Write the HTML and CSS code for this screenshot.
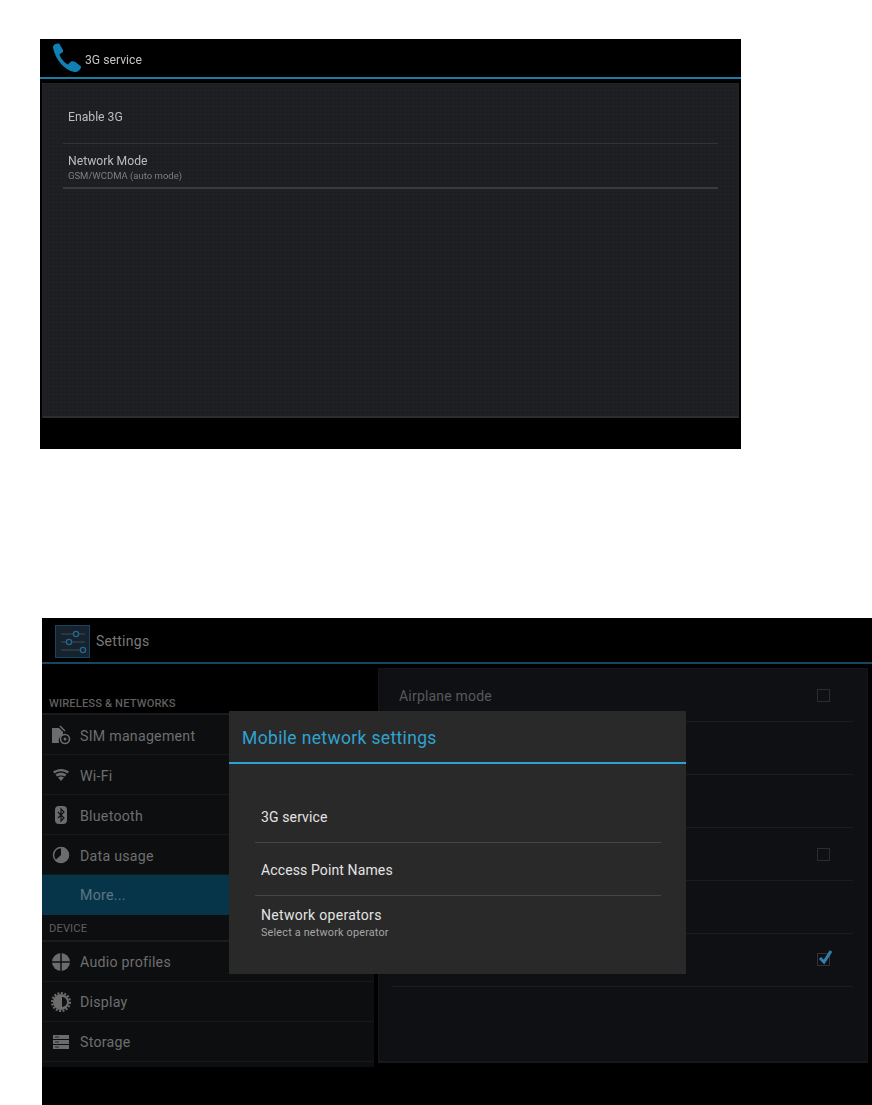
FILE: index.html
```html
<!DOCTYPE html>
<html lang="en">
<head>
<meta charset="utf-8">
<title>Android settings</title>
<link rel="stylesheet" href="styles.css">
</head>
<body>
<main class="page">
  <section class="shot shot-service">
    <header class="bar bar-service">
      <svg class="phone" viewBox="0 0 32 32" width="30" height="30"><path d="M1 4C2 1 6 0 8 1L12 8C12 10 10 11 8 12C9 16 13 21 17 23L20 20C22 19 24 20 26 21L31 25C31 28 28 31 24 31C13 29 3 17 1 4Z" fill="#0f7fb4"/></svg>
      <span class="bar-title">3G service</span>
    </header>
    <div class="service-panel">
      <div class="service-row service-row-one"><span class="service-name">Enable 3G</span></div>
      <div class="service-row service-row-two">
        <span class="service-name">Network Mode</span>
        <span class="service-sub">GSM/WCDMA (auto mode)</span>
      </div>
    </div>
    <div class="service-foot"></div>
  </section>

  <section class="shot shot-settings">
    <header class="bar bar-settings">
      <svg class="settings-icon" viewBox="0 0 35 33" width="35" height="33">
        <rect x="0.5" y="0.5" width="34" height="32" fill="#16232e" stroke="#1a4460"/>
        <path d="M6 9H30M6 17H30M6 25H30" stroke="#3f4a52" stroke-width="1"/>
        <circle cx="21" cy="9" r="2.6" fill="#16232e" stroke="#25688f" stroke-width="1.3"/>
        <circle cx="14" cy="17" r="2.6" fill="#16232e" stroke="#25688f" stroke-width="1.3"/>
        <circle cx="28" cy="25" r="2.6" fill="#16232e" stroke="#25688f" stroke-width="1.3"/>
      </svg>
      <span class="settings-title">Settings</span>
    </header>
    <div class="settings-body">
      <nav class="side">
        <div class="side-head side-head-first">WIRELESS &amp; NETWORKS</div>
        <div class="side-row">
          <svg class="side-icon" viewBox="0 0 20 20" width="20" height="20"><path d="M1 3H8L12 7V10A6 6 0 0 0 8 18H1Z" fill="#6c6c6c"/><path d="M9 1L14 6" stroke="#6c6c6c" stroke-width="1.5"/><circle cx="14" cy="14" r="4.5" fill="none" stroke="#6c6c6c" stroke-width="1.6"/><circle cx="14" cy="14" r="1.5" fill="#6c6c6c"/></svg>
          <span>SIM management</span>
        </div>
        <div class="side-row">
          <svg class="side-icon" viewBox="0 0 20 20" width="20" height="20"><path d="M2 6.500C7 3 13 3 18 6.500L16.500 8.500C12 5.500 8 5.500 3.500 8.500Z" fill="#6c6c6c"/><path d="M4.500 9.500C8 7.300 12 7.300 15.500 9.500L14 11.500C11.500 10 8.500 10 6 11.500Z" fill="#6c6c6c"/><path d="M7 12.500C9 11.300 11 11.300 13 12.500L10 16Z" fill="#6c6c6c"/></svg>
          <span>Wi-Fi</span>
        </div>
        <div class="side-row">
          <svg class="side-icon" viewBox="0 0 20 20" width="20" height="20"><rect x="4" y="1" width="12" height="18" rx="4" fill="#6c6c6c"/><path d="M7 7L13 13L10 16V4L13 7L7 13" fill="none" stroke="#111" stroke-width="1.200"/></svg>
          <span>Bluetooth</span>
        </div>
        <div class="side-row">
          <svg class="side-icon" viewBox="0 0 20 20" width="20" height="20"><circle cx="10" cy="10" r="7.500" fill="none" stroke="#6c6c6c" stroke-width="1.500"/><path d="M10 2A8 8 0 1 1 4 15.500L10 10Z" fill="#6c6c6c"/></svg>
          <span>Data usage</span>
        </div>
        <div class="side-row side-row-active"><span>More...</span></div>
        <div class="side-head side-head-device">DEVICE</div>
        <div class="side-row side-row-device">
          <svg class="side-icon" viewBox="0 0 20 20" width="20" height="20"><circle cx="10" cy="10" r="9" fill="#6c6c6c"/><path d="M10 0V20M0 10H20" stroke="#111" stroke-width="1.500"/></svg>
          <span>Audio profiles</span>
        </div>
        <div class="side-row side-row-device">
          <svg class="side-icon" viewBox="0 0 20 20" width="20" height="20"><circle cx="10" cy="10" r="9" fill="none" stroke="#6c6c6c" stroke-width="2" stroke-dasharray="2 1.500"/><circle cx="10" cy="10" r="8" fill="#6c6c6c"/><path d="M11 5A5 5 0 0 1 11 15Z" fill="#111"/></svg>
          <span>Display</span>
        </div>
        <div class="side-row side-row-device">
          <svg class="side-icon" viewBox="0 0 20 20" width="20" height="20"><path d="M2 3H18V7H2ZM2 8H18V12H2ZM2 13H18V17H2Z" fill="#6c6c6c"/><path d="M4 5H8M4 10H8M4 15H8" stroke="#222" stroke-width="1"/></svg>
          <span>Storage</span>
        </div>
      </nav>
      <div class="detail">
        <div class="detail-row detail-row-first"><span>Airplane mode</span><i class="check"></i></div>
        <div class="detail-row"></div>
        <div class="detail-row"></div>
        <div class="detail-row"><i class="check"></i></div>
        <div class="detail-row"></div>
        <div class="detail-row">
          <i class="check check-on"><svg viewBox="0 0 16 16" width="16" height="16"><path d="M3 9L7 13L14 2" fill="none" stroke="#2f80ad" stroke-width="3"/></svg></i>
        </div>
      </div>
    </div>
    <aside class="dialog">
      <h2 class="dialog-title">Mobile network settings</h2>
      <div class="dialog-list">
        <div class="dialog-row"><span class="dialog-name">3G service</span></div>
        <div class="dialog-row"><span class="dialog-name">Access Point Names</span></div>
        <div class="dialog-row dialog-row-last">
          <span class="dialog-name dialog-name-wide">Network operators</span>
          <span class="dialog-sub">Select a network operator</span>
        </div>
      </div>
    </aside>
  </section>
</main>
</body>
</html>
```
FILE: styles.css
```css
* { box-sizing: border-box; }
html, body { margin: 0; padding: 0; background: #fff; }
body { font-family: Roboto, "Noto Sans", sans-serif; overflow: hidden; }
.page { width: 872px; height: 1105px; display: flex; flex-direction: column; padding: 39px 0 0 40px; }

.shot { background: #000; }
.bar { display: flex; align-items: center; }

/* first screenshot */
.shot-service { width: 701px; height: 410px; display: flex; flex-direction: column; }
.bar-service { height: 40px; border-bottom: 2px solid #1a7da6; padding: 3px 0 0 12px; }
.phone { flex: none; margin-top: -3px; }
.bar-title { margin-left: 3px; font-size: 12.200px; color: #c4c4c4; filter: blur(0.4px); }
.service-panel {
  flex: none; height: 335px; margin: 4px 2px 0;
  background-color: #1f2024;
  background-image: linear-gradient(rgba(0,0,0,0.06) 1px, transparent 1px), linear-gradient(90deg, rgba(0,0,0,0.06) 1px, transparent 1px);
  background-size: 4px 4px;
  border: 1px solid #232427; border-bottom: 2px solid #2b2d30;
}
.service-row { margin: 0 20px; border-bottom: 1px solid #333436; display: flex; flex-direction: column; padding-left: 5px; }
.service-row-one { height: 60px; justify-content: center; padding-top: 6px; }
.service-row-two { height: 45px; padding-top: 10px; border-bottom: 2px solid #3a3b3d; }
.service-name { font-size: 12.200px; line-height: 14px; color: #bcbcbc; filter: blur(0.4px); }
.service-sub { margin-top: 2px; font-size: 9.500px; line-height: 11px; color: #7f7f7f; filter: blur(0.4px); }
.service-foot { flex: 1; background: #000; }

/* second screenshot */
.shot-settings { position: relative; width: 830px; height: 487px; margin: 169px 0 0 2px; }
.bar-settings { height: 46px; border-bottom: 2px solid #174660; padding: 2px 0 0 13px; }
.settings-icon { flex: none; margin-top: 1px; }
.settings-title { margin-left: 6px; font-size: 14px; letter-spacing: 0.300px; color: #7a7a7a; }
.settings-body { display: flex; height: 403px; }

.side { width: 332px; flex: none; background: #0d0e10; }
.side-head { font-size: 11.200px; font-weight: 500; color: #5f5f5f; letter-spacing: 0.100px; border-bottom: 2px solid #1a1b1c; display: flex; align-items: center; padding-left: 7px; }
.side-head-first { height: 51px; padding-top: 29px; background: #000; }
.side-head-device { height: 27px; padding-top: 1px; background: #0d0e10; font-weight: 400; }
.side-row { height: 40px; display: flex; align-items: center; padding: 2px 0 0 38px; position: relative; font-size: 14.200px; letter-spacing: 0.250px; color: #6e6e6e; border-bottom: 1px solid #18191b; }
.side-row-device { padding-top: 1px; }
.side-icon { position: absolute; left: 9px; top: 10px; }
.side-row-active { background: #06354a; color: #5d7682; border-bottom: 0; padding-top: 0; }

.detail { margin: 4px 4px 0; flex: 1; height: 395px; background: #0f1013; border: 1px solid #141517; border-bottom: 2px solid #17181a; padding: 0 14px 0 13px; }
.detail-row { height: 53px; border-bottom: 1px solid #1b1c1e; display: flex; align-items: center; justify-content: flex-end; padding-right: 23px; position: relative; font-size: 14px; letter-spacing: 0.200px; color: #58595b; }
.detail-row-first { justify-content: space-between; padding-left: 7px; padding-top: 1px; }
.check { display: block; position: relative; width: 13px; height: 13px; border: 1px solid #2b2c2e; }
.detail-row-first .check { margin-top: -1px; }
.check-on { border-color: #3a2f33; margin-top: -2px; }
.check-on svg { position: absolute; left: -1px; top: -5px; }

.dialog { position: absolute; left: 187px; top: 93px; width: 457px; height: 263px; background: #292929; }
.dialog-title { margin: 0; height: 53px; border-bottom: 2px solid #2aa3d3; padding: 16px 0 0 13px; font-size: 17.500px; line-height: 22px; font-weight: 400; letter-spacing: 0.350px; color: #30a3d0; }
.dialog-list { padding: 26px 25px 0 26px; }
.dialog-row { height: 53px; border-bottom: 1px solid #454545; padding: 2px 0 0 6px; display: flex; flex-direction: column; justify-content: center; }
.dialog-row-last { border-bottom: 0; height: 60px; justify-content: flex-start; padding-top: 11px; }
.dialog-name { font-size: 14px; line-height: 17px; letter-spacing: 0.120px; color: #e4e4e4; }
.dialog-name-wide { letter-spacing: 0.300px; }
.dialog-sub { margin-top: 2px; font-size: 10.800px; line-height: 14px; letter-spacing: 0.200px; color: #a6a6a6; }
```
